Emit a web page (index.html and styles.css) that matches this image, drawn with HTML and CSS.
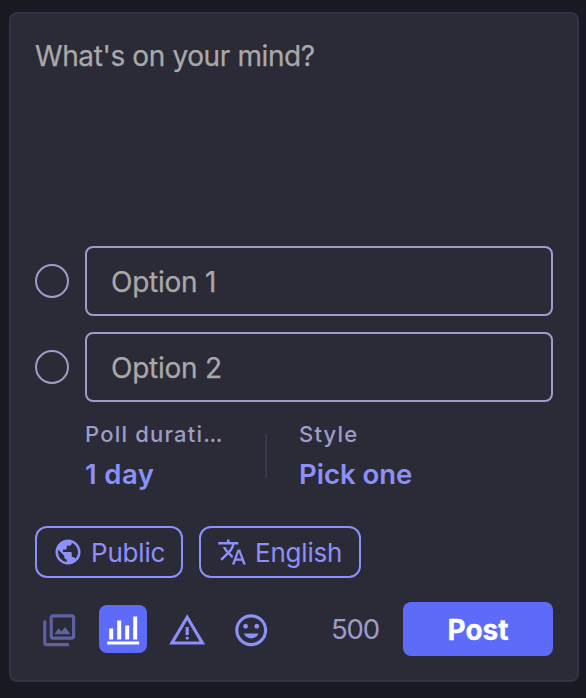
FILE: index.html
```html
<!DOCTYPE html>
<html lang="en">
<head>
<meta charset="utf-8">
<title>Compose</title>
<link rel="stylesheet" href="styles.css">
</head>
<body>
<form class="compose">
  <div class="prompt"><span>What's on your mind?</span></div>
  <div class="options">
    <div class="option"><span class="radio"></span><div class="field"><span>Option 1</span></div></div>
    <div class="option"><span class="radio"></span><div class="field"><span>Option 2</span></div></div>
  </div>
  <div class="settings">
    <div class="setting"><div class="label">Poll durati<span class="dots">...</span></div><div class="value day">1 day</div></div>
    <div class="divider"></div>
    <div class="setting"><div class="label style">Style</div><div class="value">Pick one</div></div>
  </div>
  <div class="dropdowns">
    <div class="pill public">
      <svg viewBox="0 -960 960 960"><path d="M480-80q-83 0-156-31.500T197-197q-54-54-85.500-127T80-480q0-83 31.500-156T197-763q54-54 127-85.500T480-880q83 0 156 31.500T763-763q54 54 85.500 127T880-480q0 83-31.500 156T763-197q-54 54-127 85.500T480-80Zm-40-82v-78q-33 0-56.500-23.500T360-320v-40L168-552q-3 18-5.500 36t-2.500 36q0 121 79.500 212T440-162Zm276-102q20-22 36-47.500t26.500-53q10.500-27.500 16-56.500t5.500-59q0-98-54.500-179T600-776v16q0 33-23.500 56.500T520-680h-80v80q0 17-11.500 28.500T400-560h-80v80h240q17 0 28.500 11.500T600-440v120h40q26 0 47 15.500t29 40.500Z"/></svg>
      <span>Public</span>
    </div>
    <div class="pill english">
      <svg viewBox="0 -960 960 960"><path d="m476-80 182-480h84L924-80h-84l-43-122H603L560-80h-84ZM160-200l-56-56 202-202q-35-35-63.500-80T190-640h84q20 39 40 68t48 58q33-33 68.500-92.500T484-720H40v-80h280v-80h80v80h280v80H564q-21 72-63 148t-83 116l96 98-30 82-122-125-202 201Zm468-72h144l-72-204-72 204Z"/></svg>
      <span>English</span>
    </div>
  </div>
  <div class="footer">
    <div class="tool disabled"><svg viewBox="0 -960 960 960"><path d="M360-380h400L630-560l-92 112-72-78-106 146ZM320-240q-33 0-56.500-23.500T240-320v-480q0-33 23.500-56.500T320-880h480q33 0 56.500 23.500T880-800v480q0 33-23.500 56.500T800-240H320Zm0-80h480v-480H320v480ZM160-80q-33 0-56.500-23.500T80-160v-560h80v560h560v80H160Z"/></svg></div>
    <div class="tool active"><svg viewBox="0 -960 960 960"><path d="M80-120v-80h800v80H80Zm50-125v-275h100v275H130Zm200 0v-475h100v475H330Zm200 0v-350h100v350H530Zm200 0v-575h100v575H730Z"/></svg></div>
    <div class="tool"><svg viewBox="0 -960 960 960"><path d="m30-120 450-760 450 760H30Zm138-80h624L480-730 168-200Zm312-40q17 0 28.500-11.500T520-280q0-17-11.500-28.500T480-320q-17 0-28.500 11.500T440-280q0 17 11.500 28.500T480-240Zm-40-120h80v-200h-80v200Z"/></svg></div>
    <div class="tool"><svg viewBox="0 -960 960 960"><path d="M480-275q62 0 112-34.500T666-400H294q24 56 74 90.500T480-275ZM340-520q25 0 42.500-17.500T400-580q0-25-17.500-42.500T340-640q-25 0-42.500 17.500T280-580q0 25 17.500 42.500T340-520Zm280 0q25 0 42.500-17.500T680-580q0-25-17.500-42.500T620-640q-25 0-42.500 17.500T560-580q0 25 17.500 42.500T620-520ZM480-80q-83 0-156-31.500T197-197q-54-54-85.500-127T80-480q0-83 31.500-156T197-763q54-54 127-85.500T480-880q83 0 156 31.500T763-763q54 54 85.500 127T880-480q0 83-31.500 156T763-197q-54 54-127 85.500T480-80Zm0-80q134 0 227-93t93-227q0-134-93-227t-227-93q-134 0-227 93t-93 227q0 134 93 227t227 93Z"/></svg></div>
    <span class="count">500</span>
    <div class="post"><span>Post</span></div>
  </div>
</form>
</body>
</html>
```
FILE: styles.css
```css
* { box-sizing: border-box; }
body {
  margin: 0;
  padding: 12px 7px 16px 9px;
  height: 698px;
  background: #191922;
  font-family: Inter, "Liberation Sans", sans-serif;
  color: #9d9dc8;
  white-space: nowrap;
}
.compose {
  height: 670px;
  padding: 24px;
  background: #2b2a37;
  border: 2px solid #333244;
  border-radius: 8px;
}
svg { display: block; fill: currentColor; flex: none; }
.prompt {
  height: 208px;
  font-size: 28px;
  line-height: 36px;
  letter-spacing: -0.39px;
  -webkit-text-stroke: 0.25px currentColor;
  color: #a9a9a9;
}
.options { display: grid; gap: 16px; }
.option { display: flex; align-items: center; gap: 16px; }
.radio {
  width: 34px;
  height: 34px;
  border: 2px solid #9d9dcb;
  border-radius: 50%;
}
.field {
  flex: 1;
  height: 70px;
  padding: 0 24px;
  border: 2px solid #9d9dcb;
  border-radius: 8px;
  font-size: 28px;
  line-height: 68px;
  letter-spacing: -0.25px;
  -webkit-text-stroke: 0.25px currentColor;
  color: #a9a9a9;
}
.settings {
  display: flex;
  align-items: center;
  height: 72px;
  margin: 18px 0 0 50px;
}
.setting:first-child { width: 180px; }
.divider { width: 2px; height: 44px; margin-right: 32px; background: #39384c; }
.label { font-size: 22px; line-height: 28px; letter-spacing: 1.2px; font-weight: 500; }
.dots { letter-spacing: -0.4px; }
.value { margin-top: 8px; font-size: 27.5px; line-height: 36px; font-weight: 600; color: #8b90fb; }
.day { letter-spacing: 0.4px; }
.dropdowns { display: flex; gap: 16px; margin-top: 34px; color: #8b90fb; }
.pill {
  display: flex;
  align-items: center;
  gap: 8px;
  height: 52px;
  padding: 0 16px;
  border: 2px solid currentColor;
  border-radius: 12px;
  font-size: 26px;
  letter-spacing: -0.2px;
}
.pill svg { width: 30px; height: 30px; }
.public { width: 148px; }
.english { width: 162px; }
.footer { display: flex; align-items: center; gap: 16px; margin-top: 24px; height: 54px; }
.tool {
  display: grid;
  place-items: center;
  width: 48px;
  height: 48px;
  padding-top: 1.4px;
  border-radius: 8px;
  color: #8b90fb;
}
.tool svg { width: 38.4px; height: 38.4px; }
.disabled svg { opacity: 0.55; }
.active { color: #fff; background: #5e6bf8; }
.count { margin-left: auto; font-size: 27.5px; letter-spacing: -1.1px; }
.post {
  width: 150px;
  height: 54px;
  margin-left: 8px;
  border-radius: 8px;
  background: #5e6bf8;
  color: #fff;
  font-size: 28px;
  font-weight: 700;
  line-height: 56px;
  -webkit-text-stroke: 0.3px currentColor;
  text-align: center;
}
```
